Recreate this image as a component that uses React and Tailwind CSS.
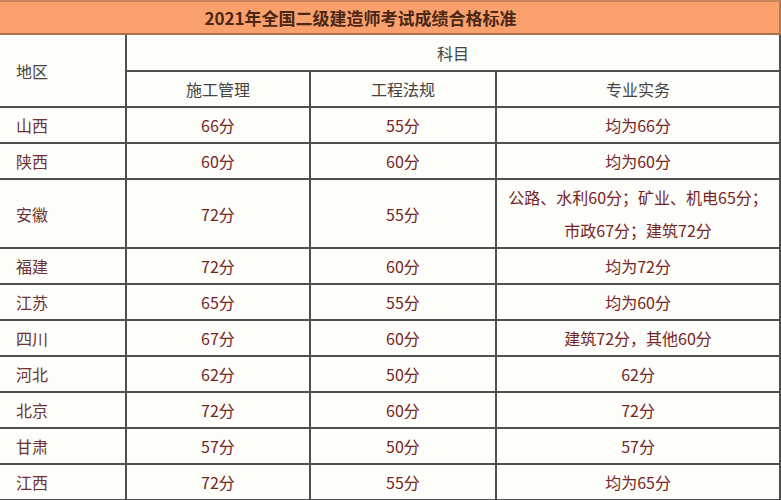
import React from 'react';

const rows = [
  { region: '山西', a: '66分', b: '55分', c: '均为66分' },
  { region: '陕西', a: '60分', b: '60分', c: '均为60分' },
  { region: '安徽', a: '72分', b: '55分', c: ['公路、水利60分；矿业、机电65分；', '市政67分；建筑72分'], tall: true },
  { region: '福建', a: '72分', b: '60分', c: '均为72分' },
  { region: '江苏', a: '65分', b: '55分', c: '均为60分' },
  { region: '四川', a: '67分', b: '60分', c: '建筑72分，其他60分' },
  { region: '河北', a: '62分', b: '50分', c: '62分' },
  { region: '北京', a: '72分', b: '60分', c: '72分' },
  { region: '甘肃', a: '57分', b: '50分', c: '57分' },
  { region: '江西', a: '72分', b: '55分', c: '均为65分' },
];

export default function App() {
  return (
    <div
      className="w-[781px] h-[500px] overflow-hidden bg-[#fdfdfa] text-[16px]"
      style={{ fontFamily: '"Noto Sans CJK SC", "Noto Sans", sans-serif' }}
    >
      {/* Title bar */}
      <div className="h-[35px] flex items-center justify-center pr-[58px] bg-[#f9a06c] border-t-2 border-b-2 border-r-2 border-t-[#c98458] border-b-[#a8704c] border-r-[#b07a58] font-bold text-[17px] text-[#4a2716] leading-none">
        2021年全国二级建造师考试成绩合格标准
      </div>

      <table className="w-[780px] table-fixed border-collapse leading-6">
        <colgroup>
          <col className="w-[126px]" />
          <col className="w-[184px]" />
          <col className="w-[186px]" />
          <col className="w-[284px]" />
        </colgroup>
        <tbody>
          <tr className="h-[36px]">
            <td rowSpan={2} className="border-2 border-l-0 border-t-0 border-[#4f4f4f] pl-4 text-left text-[#444]">
              地区
            </td>
            <td colSpan={3} className="border-2 border-t-0 border-[#4f4f4f] text-center text-[#444]">
              科目
            </td>
          </tr>
          <tr className="h-[36px]">
            <td className="border-2 border-[#4f4f4f] text-center text-[#444]">施工管理</td>
            <td className="border-2 border-[#4f4f4f] text-center text-[#444]">工程法规</td>
            <td className="border-2 border-[#4f4f4f] text-center text-[#444]">专业实务</td>
          </tr>
          {rows.map((r) => (
            <tr key={r.region} className={r.tall ? 'h-[69px]' : 'h-[36px]'}>
              <td className="border-2 border-l-0 border-[#4f4f4f] pl-4 text-left text-[#6b3333]">{r.region}</td>
              <td className="border-2 border-[#4f4f4f] text-center text-[#762424]">{r.a}</td>
              <td className="border-2 border-[#4f4f4f] text-center text-[#762424]">{r.b}</td>
              <td className={`border-2 border-[#4f4f4f] text-center text-[#762424] ${r.tall ? 'leading-[33px]' : ''}`}>
                {Array.isArray(r.c) ? (
                  <>
                    {r.c[0]}
                    <br />
                    {r.c[1]}
                  </>
                ) : (
                  r.c
                )}
              </td>
            </tr>
          ))}
        </tbody>
      </table>
    </div>
  );
}
